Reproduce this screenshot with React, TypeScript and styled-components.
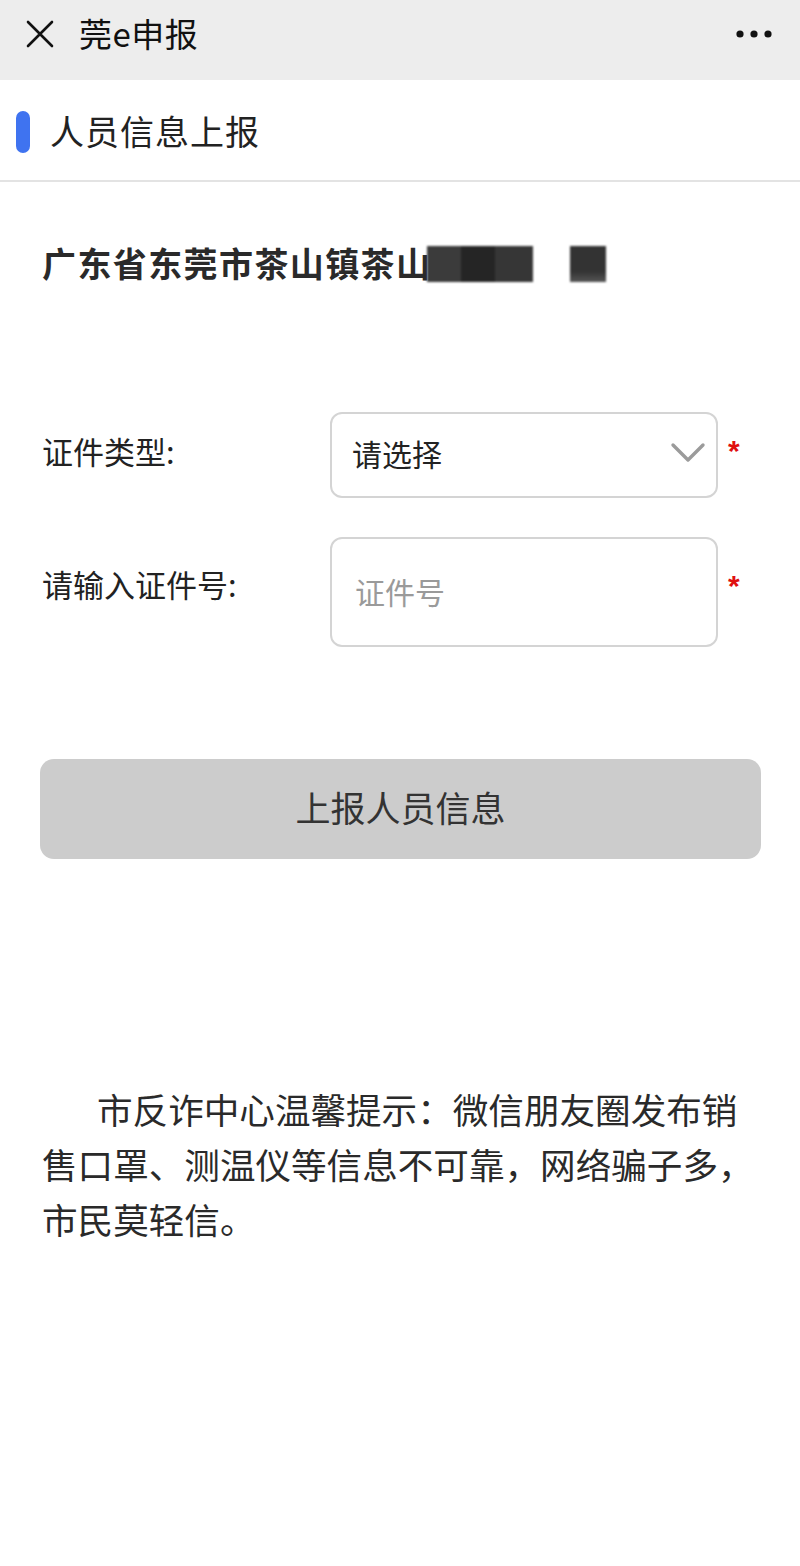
import React from "react";
import styled, { createGlobalStyle } from "styled-components";

const Global = createGlobalStyle`
  html, body { margin: 0; padding: 0; background: #ffffff; }
  body { font-family: "Noto Sans CJK SC", "Noto Sans", sans-serif; color: #222; }
  * { box-sizing: border-box; }
`;

const Page = styled.div`
  width: 800px;
  min-height: 1566px;
  background: #fff;
  display: flex;
  flex-direction: column;
`;

const NavBar = styled.header`
  height: 80px;
  background: #ededed;
  display: flex;
  align-items: center;
  padding: 0 28px 12px 26px;
`;

const NavTitle = styled.div`
  font-size: 33px;
  color: #111;
  margin-left: 25px;
  flex: 1;
  line-height: 1;
  padding-bottom: 2px;
  letter-spacing: 0.5px;
`;

const IconBtn = styled.div`
  display: flex;
  align-items: center;
  justify-content: center;
`;

const SectionHeader = styled.div`
  height: 102px;
  border-bottom: 2px solid #e3e3e3;
  display: flex;
  align-items: center;
  padding-left: 16px;
  gap: 20px;
`;

const BlueBar = styled.span`
  width: 14px;
  height: 42px;
  border-radius: 7px;
  background: #3f73f0;
  margin-top: 4px;
`;

const SectionTitle = styled.h2`
  margin: 0;
  font-size: 34px;
  font-weight: 400;
  color: #222;
  letter-spacing: 1px;
`;

const Content = styled.main`
  padding: 0 39px 0 42px;
  display: flex;
  flex-direction: column;
`;

const Address = styled.div`
  margin-top: 58px;
  display: flex;
  align-items: center;
  height: 44px;
  font-size: 34px;
  font-weight: 700;
  color: #2a2a2a;
  letter-spacing: 1.4px;
`;

const Mosaic = styled.span<{ w: number; ml: number; solid?: boolean }>`
  display: inline-block;
  width: ${(p) => p.w}px;
  height: 36px;
  margin-left: ${(p) => p.ml}px;
  margin-top: 4px;
  filter: blur(1px);
  background: ${(p) =>
    p.solid
      ? "linear-gradient(180deg, #333 0%, #333 70%, #555 100%)"
      : "linear-gradient(90deg, #3b3b3b 0%, #3b3b3b 32%, #252525 32%, #252525 64%, #363636 64%, #363636 100%)"};
`;

const Form = styled.div`
  margin-top: 128px;
  display: flex;
  flex-direction: column;
  gap: 39px;
`;

const Row = styled.div`
  display: flex;
  align-items: flex-start;
`;

const Label = styled.label<{ offset: number }>`
  width: 288px;
  font-size: 31px;
  color: #222;
  padding-top: ${(p) => p.offset}px;
  line-height: 1.2;
`;

const Field = styled.div<{ h: number }>`
  width: 388px;
  height: ${(p) => p.h}px;
  border: 2px solid #d4d4d4;
  border-radius: 12px;
  display: flex;
  align-items: center;
  justify-content: space-between;
  padding: 0 10px 4px 20px;
  font-size: 30px;
  color: #222;
`;

const Placeholder = styled.span`
  color: #9a9a9a;
  padding-left: 3px;
  padding-top: 2px;
`;

const Required = styled.span<{ top: number }>`
  color: #e01010;
  font-size: 30px;
  font-weight: 700;
  margin-left: 10px;
  line-height: 1;
  padding-top: ${(p) => p.top}px;
  font-family: "Liberation Sans", sans-serif;
`;

const SubmitButton = styled.button`
  margin: 112px 0 0 -2px;
  height: 100px;
  border: none;
  border-radius: 14px;
  background: #cccccc;
  color: #333;
  font-family: "Noto Sans CJK SC", sans-serif;
  font-size: 35px;
  display: flex;
  align-items: center;
  justify-content: center;
  padding-bottom: 6px;
`;

const Notice = styled.p`
  margin: 222px 0 0 0;
  width: 718px;
  font-size: 35.6px;
  line-height: 55px;
  text-indent: 55px;
  color: #2a2a2a;
`;

export default function App() {
  return (
    <Page>
      <Global />
      <NavBar>
        <IconBtn>
          <svg width="28" height="28" viewBox="0 0 28 28">
            <path d="M2 2 L26 26 M26 2 L2 26" stroke="#111" strokeWidth="2.6" strokeLinecap="round" />
          </svg>
        </IconBtn>
        <NavTitle>莞e申报</NavTitle>
        <IconBtn>
          <svg width="36" height="10" viewBox="0 0 36 10">
            <circle cx="4" cy="5" r="3.6" fill="#111" />
            <circle cx="18" cy="5" r="3.6" fill="#111" />
            <circle cx="32" cy="5" r="3.6" fill="#111" />
          </svg>
        </IconBtn>
      </NavBar>

      <SectionHeader>
        <BlueBar />
        <SectionTitle>人员信息上报</SectionTitle>
      </SectionHeader>

      <Content>
        <Address>
          广东省东莞市茶山镇茶山
          <Mosaic w={106} ml={-4} />
          <Mosaic w={36} ml={37} solid />
        </Address>

        <Form>
          <Row>
            <Label offset={20}>证件类型:</Label>
            <Field h={86}>
              <span>请选择</span>
              <svg width="36" height="22" viewBox="0 0 36 22">
                <path d="M3 3 L18 18 L33 3" fill="none" stroke="#9b9b9b" strokeWidth="3.4" strokeLinecap="round" strokeLinejoin="round" />
              </svg>
            </Field>
            <Required top={24}>*</Required>
          </Row>
          <Row>
            <Label offset={28}>请输入证件号:</Label>
            <Field h={110}>
              <Placeholder>证件号</Placeholder>
            </Field>
            <Required top={34}>*</Required>
          </Row>
        </Form>

        <SubmitButton type="button">上报人员信息</SubmitButton>

        <Notice>
          市反诈中心温馨提示：微信朋友圈发布销售口罩、测温仪等信息不可靠，网络骗子多，市民莫轻信。
        </Notice>
      </Content>
    </Page>
  );
}
